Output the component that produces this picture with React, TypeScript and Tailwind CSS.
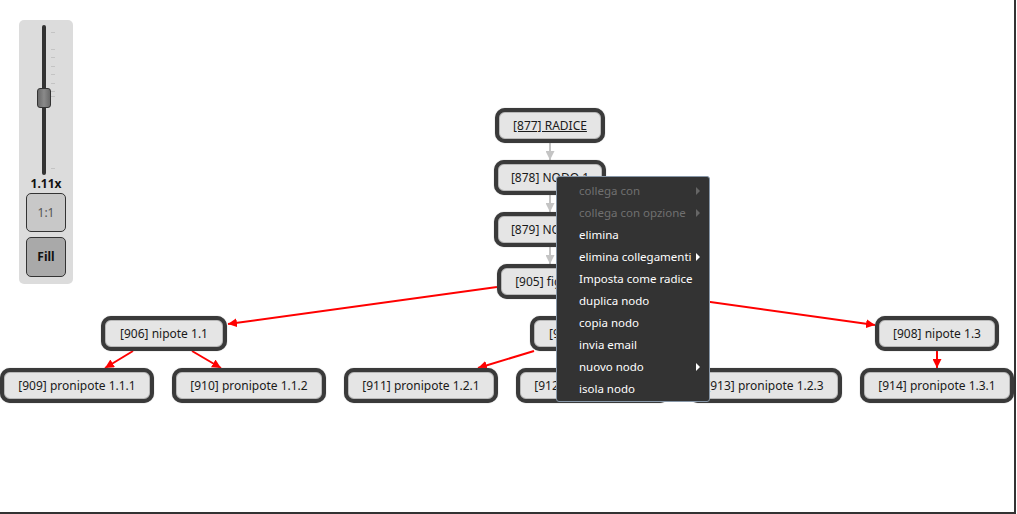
import React from 'react';

type GraphNode = { id: string; label: string; box: string; underline?: boolean };

// node boxes on the canvas (left/top/width), height is shared
const nodes: GraphNode[] = [
    { id: '877', label: '[877] RADICE', box: 'left-[495px] top-[108px] w-[110px]', underline: true },
    { id: '878', label: '[878] NODO 1', box: 'left-[494px] top-[160px] w-[112px]' },
    { id: '879', label: '[879] NODO 2', box: 'left-[494px] top-[212px] w-[112px]' },
    { id: '905', label: '[905] figlio 1', box: 'left-[497px] top-[264px] w-[106px]' },
    { id: '906', label: '[906] nipote 1.1', box: 'left-[101px] top-[316px] w-[126px]' },
    { id: '907', label: '[907] nipote 1.2', box: 'left-[530px] top-[316px] w-[126px]' },
    { id: '908', label: '[908] nipote 1.3', box: 'left-[875px] top-[316px] w-[124px]' },
    { id: '909', label: '[909] pronipote 1.1.1', box: 'left-[0px] top-[368px] w-[154px]' },
    { id: '910', label: '[910] pronipote 1.1.2', box: 'left-[172px] top-[368px] w-[154px]' },
    { id: '911', label: '[911] pronipote 1.2.1', box: 'left-[344px] top-[368px] w-[154px]' },
    { id: '912', label: '[912] pronipote 1.2.2', box: 'left-[516px] top-[368px] w-[154px]' },
    { id: '913', label: '[913] pronipote 1.2.3', box: 'left-[688px] top-[368px] w-[154px]' },
    { id: '914', label: '[914] pronipote 1.3.1', box: 'left-[860px] top-[368px] w-[154px]' },
];

const grayEdges = [
    [550, 143, 550, 160],
    [550, 195, 550, 212],
    [550, 247, 550, 264],
];

const redEdges = [
    [497, 287, 228, 324],
    [603, 287, 875, 325],
    [133, 351, 105, 368],
    [192, 351, 221, 368],
    [534, 351, 478, 368],
    [592, 351, 593, 368],
    [630, 351, 700, 368],
    [937, 351, 937, 368],
];

const menuItems = [
    { label: 'collega con', disabled: true, sub: true },
    { label: 'collega con opzione', disabled: true, sub: true },
    { label: 'elimina' },
    { label: 'elimina collegamenti', sub: true },
    { label: 'Imposta come radice' },
    { label: 'duplica nodo' },
    { label: 'copia nodo' },
    { label: 'invia email' },
    { label: 'nuovo nodo', sub: true },
    { label: 'isola nodo' },
];

const ticks = ['top-[7px]', 'top-[24px]', 'top-[32px]', 'top-[41px]', 'top-[49px]', 'top-[58px]', 'top-[66px]', 'top-[71px]', 'top-[143px]'];

const Edges: React.FC = () => (
    <svg className="absolute inset-0" width="1016" height="514" xmlns="http://www.w3.org/2000/svg">
        <defs>
            <marker id="redHead" viewBox="0 0 10 10" refX="10" refY="5" markerWidth="4.5" markerHeight="4.5" orient="auto">
                <path d="M0 0 L10 5 L0 10 Z" fill="#ff0000" />
            </marker>
            <marker id="grayHead" viewBox="0 0 10 10" refX="10" refY="5" markerWidth="4.5" markerHeight="4.5" orient="auto">
                <path d="M0 0 L10 5 L0 10 Z" fill="#c4c4c4" />
            </marker>
        </defs>
        {grayEdges.map(([x1, y1, x2, y2], i) => (
            <line key={'g' + i} x1={x1} y1={y1} x2={x2} y2={y2} stroke="#c4c4c4" strokeWidth="2" markerEnd="url(#grayHead)" />
        ))}
        {redEdges.map(([x1, y1, x2, y2], i) => (
            <line key={'r' + i} x1={x1} y1={y1} x2={x2} y2={y2} stroke="#ff0000" strokeWidth="2" markerEnd="url(#redHead)" />
        ))}
    </svg>
);

const ZoomPanel: React.FC = () => (
    <div className="absolute left-[19px] top-[20px] w-[54px] h-[264px] bg-[#dcdcdc] rounded-[5px] flex flex-col items-center pt-[5px]">
        <div className="relative w-full h-[150px]">
            <div className="absolute left-[23px] top-0 w-[4px] h-[150px] bg-[#333] rounded-full" />
            {ticks.map((t) => (
                <div key={t} className={`absolute left-[32px] w-[4px] h-[1px] bg-[#c4c4c4] ${t}`} />
            ))}
            <div className="absolute left-[18px] top-[63px] w-[14px] h-[20px] rounded-[3px] border border-[#333] bg-gradient-to-r from-[#6a6a6a] via-[#8a8a8a] to-[#6a6a6a]" />
        </div>
        <div className="h-[18px] leading-[18px] text-[12px] font-bold text-[#111]">1.11x</div>
        <button className="w-[40px] h-[39px] rounded-[5px] border border-[#333] bg-[#c8c8c8] text-[12px] text-[#555]">1:1</button>
        <button className="mt-[5px] w-[40px] h-[40px] rounded-[5px] border border-[#333] bg-[#a9a9a9] text-[12px] font-bold text-[#111]">Fill</button>
    </div>
);

const ContextMenu: React.FC = () => (
    <div className="absolute left-[556px] top-[176px] w-[154px] bg-[#333] border border-[#8797a8] rounded-[3px] pt-[3px] pb-[1px]">
        {menuItems.map((item) => (
            <div
                key={item.label}
                className={`relative h-[22px] flex items-center pl-[22px] text-[11.5px] ${item.disabled ? 'text-[#707070]' : 'text-white'}`}
            >
                {item.label}
                {item.sub && (
                    <span
                        className={`absolute left-[139px] top-[7px] w-0 h-0 border-y-[4px] border-y-transparent border-l-[4px] ${item.disabled ? 'border-l-[#666]' : 'border-l-white'}`}
                    />
                )}
            </div>
        ))}
    </div>
);

const App: React.FC = () => {
    return (
        <div className="relative w-[1016px] h-[514px] bg-white border-r-2 border-b-2 border-[#333] overflow-hidden font-['Segoe_UI','Noto_Sans',sans-serif]">
            <Edges />
            {nodes.map((n) => (
                <div
                    key={n.id}
                    className={`absolute h-[35px] ${n.box} rounded-[10px] border-4 border-[#3a3a3a] bg-[#e5e5e5] shadow-[inset_0_0_0_1px_#b8b8b8,0_0_1px_#777] flex items-center justify-center text-[12px] text-[#1a1a1a] whitespace-nowrap`}
                >
                    <span className={n.underline ? 'underline' : ''}>{n.label}</span>
                </div>
            ))}
            <ZoomPanel />
            <ContextMenu />
        </div>
    );
};

export default App;
